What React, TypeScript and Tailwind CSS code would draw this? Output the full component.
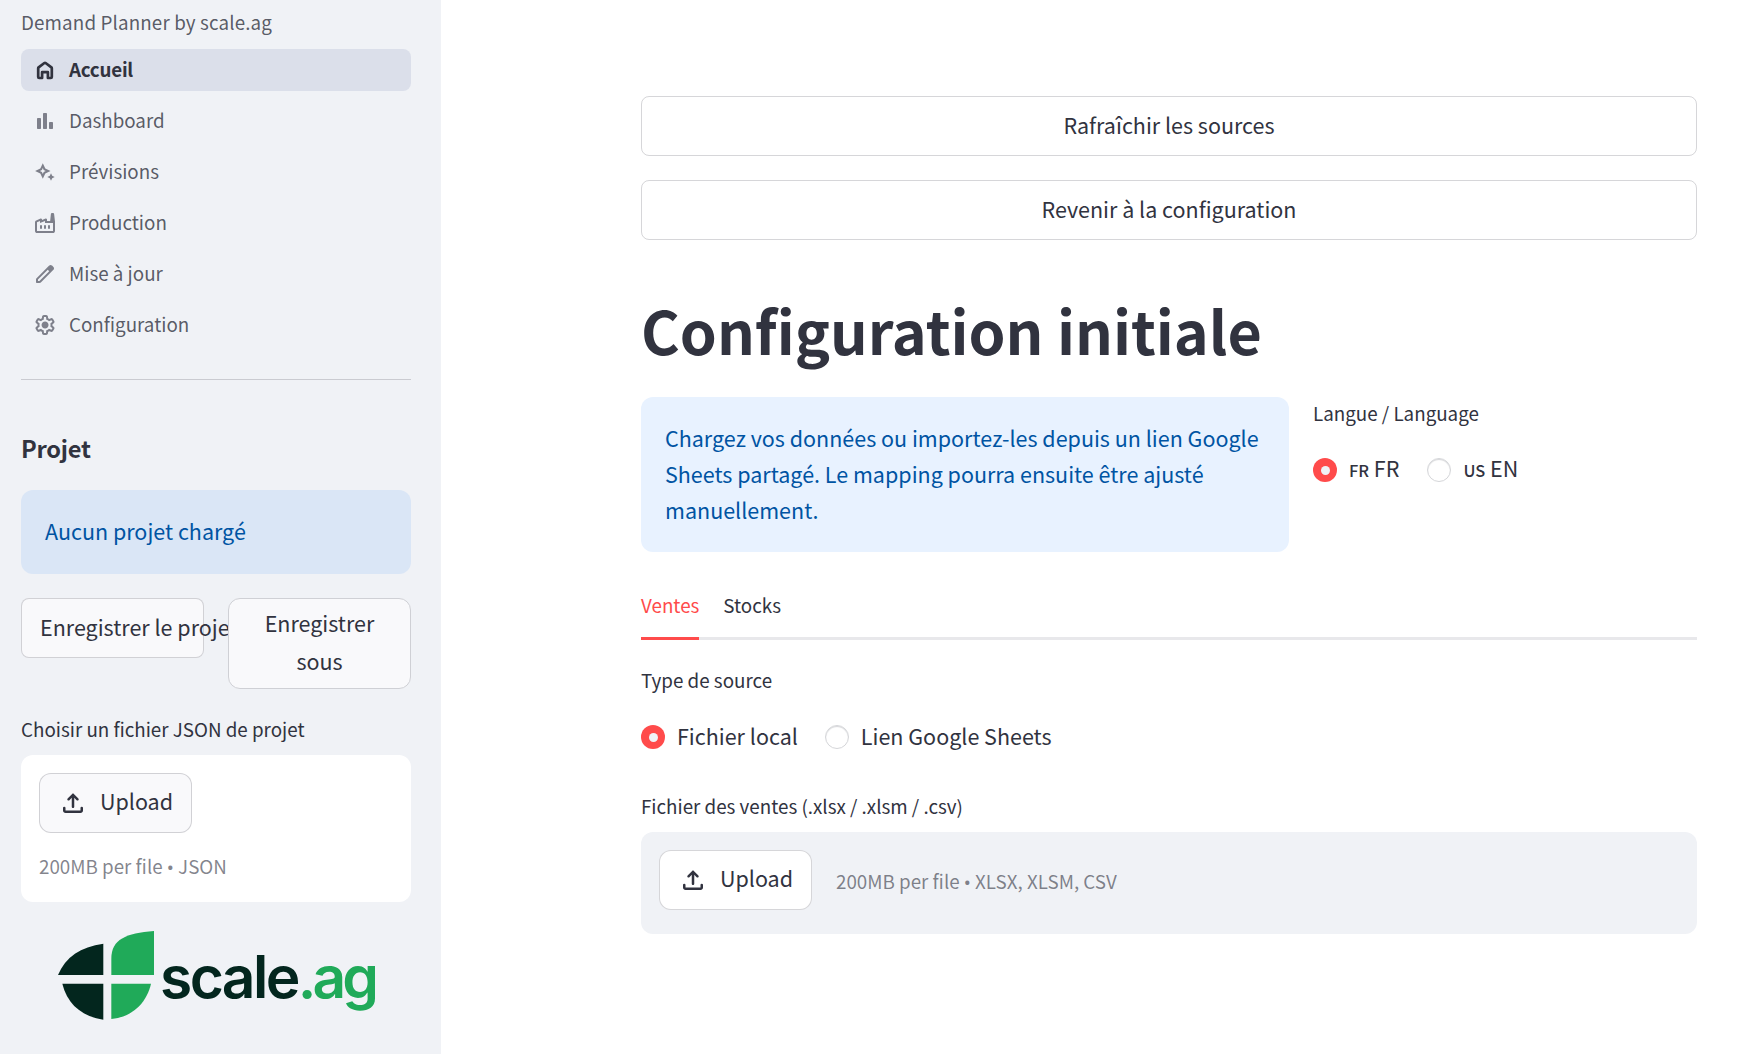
import React, { useState } from 'react';
import clsx from 'clsx';

type IconProps = { className?: string };

const HomeIcon: React.FC<IconProps> = ({ className }) => (
  <svg viewBox="0 0 24 24" className={className} fill="none" stroke="currentColor" strokeWidth="2.7" strokeLinejoin="round">
    <path d="M5.2 10.2a1 1 0 0 1 .4-.8l5.8-4.4a1 1 0 0 1 1.2 0l5.8 4.4a1 1 0 0 1 .4.8V19a1 1 0 0 1-1 1h-2.9v-5.8H9.1V20H6.2a1 1 0 0 1-1-1z" />
  </svg>
);

const BarChartIcon: React.FC<IconProps> = ({ className }) => (
  <svg viewBox="0 0 24 24" className={className} fill="currentColor">
    <rect x="4" y="9" width="4" height="11" rx="0.7" />
    <rect x="10" y="4" width="4" height="16" rx="0.7" />
    <rect x="16" y="13" width="4" height="7" rx="0.7" />
  </svg>
);

const SparkIcon: React.FC<IconProps> = ({ className }) => (
  <svg viewBox="0 0 24 24" className={className} fill="currentColor">
    <path
      fillRule="evenodd"
      d="M9.8 3.3l2.5 5.2 5.2 2.5-5.2 2.5-2.5 5.2-2.5-5.2-5.2-2.5 5.2-2.5zM9.8 8.1L8.9 10.1 6.9 11l2 .9.9 2 .9-2 2-.9-2-.9z"
    />
    <path d="M18 13.3l1.2 2.5 2.5 1.2-2.5 1.2-1.2 2.5-1.2-2.5-2.5-1.2 2.5-1.2z" />
  </svg>
);

const FactoryIcon: React.FC<IconProps> = ({ className }) => (
  <svg viewBox="0 0 24 24" className={className} fill="currentColor">
    <path d="M20 22H4q-.8 0-1.4-.6T2 20v-8.7q0-.6.3-1.1t.9-.7L7.6 7.6q.5-.2.95.1T9 8.5V9l3.6-1.45q.5-.2.95.1T14 8.45V10h8v10q0 .8-.6 1.4T20 22zM4 20h16v-8h-8v-2.05l-5 2V10l-3 1.32V20zm7-3v-2q0-1 1-1t1 1v2q0 1-1 1t-1-1zm-4 0v-2q0-1 1-1t1 1v2q0 1-1 1t-1-1zm8 0v-2q0-1 1-1t1 1v2q0 1-1 1t-1-1zM22 10.5h-4.9l.8-7.6q.1-.9 1-.9h1.2q.9 0 1 .9z" />
  </svg>
);

const EditIcon: React.FC<IconProps> = ({ className }) => (
  <svg viewBox="0 0 24 24" className={className} fill="currentColor">
    <path d="M5 19h1.425L16.2 9.225L14.775 7.8L5 17.575zm-1 2q-.425 0-.712-.288T3 20v-2.425q0-.4.15-.763t.425-.637L16.2 3.575q.3-.275.663-.425t.762-.15t.775.15t.65.45L20.425 5q.3.275.437.65T21 6.4q0 .4-.138.763t-.437.662l-12.6 12.6q-.275.275-.638.425t-.762.15z" />
  </svg>
);

const SettingsIcon: React.FC<IconProps> = ({ className }) => (
  <svg viewBox="0 0 24 24" className={className} fill="currentColor">
    <path d="M10.825 22q-.675 0-1.162-.45t-.588-1.1L8.85 18.8q-.325-.125-.612-.3t-.563-.375l-1.55.65q-.625.275-1.25.05t-.975-.8l-1.175-2.05q-.35-.575-.2-1.225t.675-1.075l1.325-1Q4.5 12.5 4.5 12.337v-.675q0-.162.025-.337l-1.325-1Q2.675 9.9 2.525 9.25t.2-1.225L3.9 5.975q.35-.575.975-.8t1.25.05l1.55.65q.275-.2.575-.375t.6-.3l.225-1.65q.1-.65.588-1.1T10.825 2h2.35q.675 0 1.163.45t.587 1.1l.225 1.65q.325.125.613.3t.562.375l1.55-.65q.625-.275 1.25-.05t.975.8l1.175 2.05q.35.575.2 1.225t-.675 1.075l-1.325 1q.025.175.025.338v.674q0 .163-.05.338l1.325 1q.525.425.675 1.075t-.2 1.225l-1.2 2.05q-.35.575-.975.8t-1.25-.05l-1.5-.65q-.275.2-.575.375t-.6.3l-.225 1.65q-.1.65-.587 1.1t-1.163.45zM11 20h1.975l.35-2.65q.775-.2 1.438-.587t1.212-.938l2.475 1.025l.975-1.7l-2.15-1.625q.125-.35.175-.737T17.5 12t-.05-.787t-.175-.738l2.15-1.625l-.975-1.7l-2.475 1.05q-.55-.575-1.212-.962t-1.438-.588L13 4h-1.975l-.35 2.65q-.775.2-1.437.588t-1.213.937L5.55 7.15l-.975 1.7l2.15 1.6q-.125.375-.175.75t-.05.8q0 .4.05.775t.175.75l-2.15 1.625l.975 1.7l2.475-1.05q.55.575 1.213.963t1.437.587zm1.05-4.5q1.45 0 2.475-1.025T15.55 12t-1.025-2.475T12.05 8.5q-1.475 0-2.488 1.025T8.55 12t1.013 2.475T12.05 15.5" />
  </svg>
);

const UploadIcon: React.FC<IconProps> = ({ className }) => (
  <svg viewBox="0 0 24 24" className={className} fill="currentColor">
    <path d="M6 20q-.825 0-1.412-.587T4 18v-2q0-.425.288-.712T5 15t.713.288T6 16v2h12v-2q0-.425.288-.712T19 15t.713.288T20 16v2q0 .825-.587 1.413T18 20zm5-12.15L9.125 9.725q-.3.3-.712.288T7.7 9.7q-.275-.3-.288-.7t.288-.7l3.6-3.6q.15-.15.325-.212T12 4.425t.375.063t.325.212l3.6 3.6q.3.3.288.7t-.288.7q-.3.3-.712.313t-.713-.288L13 7.85V15q0 .425-.288.713T12 16t-.712-.288T11 15z" />
  </svg>
);

const Logo: React.FC<IconProps> = ({ className }) => (
  <svg viewBox="0 0 1020 330" className={className}>
    <g fill="#03261e">
      <path d="M24 165C46 111 92 80 160 71V165z" />
      <path d="M37 191H160V299C96 289 52 253 37 191z" />
    </g>
    <g fill="#20aa59">
      <path d="M184 165V115C184 59 228 39 312 33V165z" />
      <path d="M184 191H303C290 249 246 291 184 297z" />
    </g>
    <g fontFamily="Inter, sans-serif" fontSize="176" fontWeight="560">
      <text x="330" y="235" fill="#03261e" textLength="421" lengthAdjust="spacing">scale</text>
      <text x="743" y="235" fill="#20aa59" textLength="244" lengthAdjust="spacing">.ag</text>
    </g>
  </svg>
);

const navItems = [
  { label: 'Accueil', icon: HomeIcon },
  { label: 'Dashboard', icon: BarChartIcon },
  { label: 'Prévisions', icon: SparkIcon },
  { label: 'Production', icon: FactoryIcon },
  { label: 'Mise à jour', icon: EditIcon },
  { label: 'Configuration', icon: SettingsIcon },
];

const UploadButton: React.FC<{ className?: string }> = ({ className }) => (
  <button
    className={clsx(
      'flex h-[60px] w-[153px] shrink-0 items-center gap-3 rounded-xl border border-[#31333f]/20 pl-[18px]',
      className
    )}
  >
    <UploadIcon className="size-[30px]" />
    <span className="pb-[4px]">Upload</span>
  </button>
);

const FileHint: React.FC<{ types: string; className?: string }> = ({ types, className }) => (
  <p className={clsx('text-[18.8px] leading-[30px] text-[#31333f]/60', className)}>
    200MB per file <span className="font-['Noto_Sans',sans-serif] leading-none">•</span> {types}
  </p>
);

type RadioProps = {
  checked: boolean;
  onSelect: () => void;
  children: React.ReactNode;
};

const Radio: React.FC<RadioProps> = ({ checked, onSelect, children }) => (
  <button role="radio" aria-checked={checked} onClick={onSelect} className="flex h-9 items-center gap-3 whitespace-nowrap">
    <span
      className={clsx(
        'flex size-6 items-center justify-center rounded-full',
        checked ? 'bg-[#ff4b4b]' : 'border border-[#d5d6d9] bg-white shadow-[inset_0_1px_1px_#d5d6d9]'
      )}
    >
      {checked && <span className="size-[9px] rounded-full bg-[#f0f2f6]" />}
    </span>
    <span className="pb-[3px]">{children}</span>
  </button>
);

const Sidebar: React.FC = () => {
  const [active, setActive] = useState('Accueil');

  return (
    <aside className="h-full w-[441px] shrink-0 bg-[#f0f2f6] pl-[21px] pr-[30px] pt-[7px]">
      <p className="text-[18.8px] leading-[30px] tracking-[0.13px] text-[#31333f]/80">Demand Planner by scale.ag</p>
      <nav className="mt-3 flex flex-col gap-[9px]">
        {navItems.map(({ label, icon: Icon }) => (
          <button
            key={label}
            onClick={() => setActive(label)}
            className={clsx(
              'flex h-[42px] items-center gap-3 rounded-lg pl-3 text-[18.8px]',
              active === label ? 'bg-[#dbdfea] font-semibold tracking-[-0.25px]' : 'text-[#31333f]/80'
            )}
          >
            <Icon className={clsx('size-6', active !== label && 'text-[#7e808b]')} />
            <span className="pb-[2px]">{label}</span>
          </button>
        ))}
      </nav>
      <hr className="mt-[33px] border-[#31333f]/20" />
      <h3 className="mt-[50px] text-[23.6px] font-semibold leading-9 tracking-[-0.25px]">Projet</h3>
      <div className="mt-6 flex h-[84px] items-center rounded-xl bg-[#dae6f6] px-6 pb-[3px] text-[#0054a3]">
        Aucun projet chargé
      </div>
      <div className="mt-6 flex items-start gap-6">
        <button className="flex h-[60px] w-[183px] items-center whitespace-nowrap rounded-lg border border-[#31333f]/20 bg-[#f9f9fb] pb-[3px] pl-[18px]">
          Enregistrer le projet
        </button>
        <button className="relative h-[91px] w-[183px] rounded-xl border border-[#cfd0d5] bg-[#f9f9fb] px-[18px] pb-[3px] leading-[38px]">
          Enregistrer sous
        </button>
      </div>
      <p className="mt-[25px] text-[18.8px] leading-[30px]">Choisir un fichier JSON de projet</p>
      <div className="mt-[11px] h-[147px] rounded-xl bg-white p-[18px]">
        <UploadButton className="bg-[#f9f9fb]" />
        <FileHint types="JSON" className="mt-[18px]" />
      </div>
      <Logo className="ml-[29px] mt-[18px] h-[110px] w-[340px]" />
    </aside>
  );
};

const App: React.FC = () => {
  const [lang, setLang] = useState('fr');
  const [tab, setTab] = useState('Ventes');
  const [source, setSource] = useState('local');

  return (
    <div className="flex h-[1054px] overflow-hidden bg-white font-['Noto_Sans_CJK_SC',sans-serif] text-[21.5px] leading-9 text-[#31333f]">
      <Sidebar />
      <main className="min-w-0 flex-1 pl-[200px] pr-[51px] pt-24">
        <div className="flex flex-col gap-6">
          <button className="h-[60px] rounded-lg border border-[#31333f]/20 pb-[3px]">Rafraîchir les sources</button>
          <button className="h-[60px] rounded-lg border border-[#31333f]/20 pb-[3px]">Revenir à la configuration</button>
        </div>

        <h1 className="mt-[50px] text-[59.2px] font-bold leading-[79px]">Configuration initiale</h1>

        <div className="mt-7 flex gap-6">
          <div className="h-[155px] w-[648px] rounded-xl bg-[#e8f2ff] px-6 pt-[23px] text-[#0054a3]">
            Chargez vos données ou importez-les depuis un lien Google Sheets partagé. Le mapping pourra ensuite être ajusté
            manuellement.
          </div>
          <div className="flex-1 pt-px">
            <p className="text-[18.8px] leading-[30px]">Langue / Language</p>
            <div role="radiogroup" className="mt-6 flex gap-7">
              <Radio checked={lang === 'fr'} onSelect={() => setLang('fr')}>
                <span className="text-[16.4px] font-medium">FR</span> FR
              </Radio>
              <Radio checked={lang === 'en'} onSelect={() => setLang('en')}>
                <span className="text-[16.4px] font-medium">US</span> EN
              </Radio>
            </div>
          </div>
        </div>

        <div className="mt-[38px] flex gap-6 text-[18.8px] leading-[30px] shadow-[inset_0_-3px_0_#e8e8eb]">
          {['Ventes', 'Stocks'].map((name) => (
            <button
              key={name}
              onClick={() => setTab(name)}
              className={clsx(
                'border-b-[3px] pb-[17px]',
                tab === name ? 'border-[#ff4b4b] text-[#ff4b4b]' : 'border-transparent'
              )}
            >
              {name}
            </button>
          ))}
        </div>

        <p className="mt-[25px] text-[18.8px] leading-[30px]">Type de source</p>
        <div role="radiogroup" className="mt-6 flex gap-[27px]">
          <Radio checked={source === 'local'} onSelect={() => setSource('local')}>
            Fichier local
          </Radio>
          <Radio checked={source === 'sheets'} onSelect={() => setSource('sheets')}>
            Lien Google Sheets
          </Radio>
        </div>

        <p className="mt-9 text-[18.8px] leading-[30px]">Fichier des ventes (.xlsx / .xlsm / .csv)</p>
        <div className="mt-[11px] flex h-[102px] gap-6 rounded-xl bg-[#f0f2f6] p-[18px]">
          <UploadButton className="bg-white" />
          <FileHint types="XLSX, XLSM, CSV" className="pt-4" />
        </div>
      </main>
    </div>
  );
};

export default App;
